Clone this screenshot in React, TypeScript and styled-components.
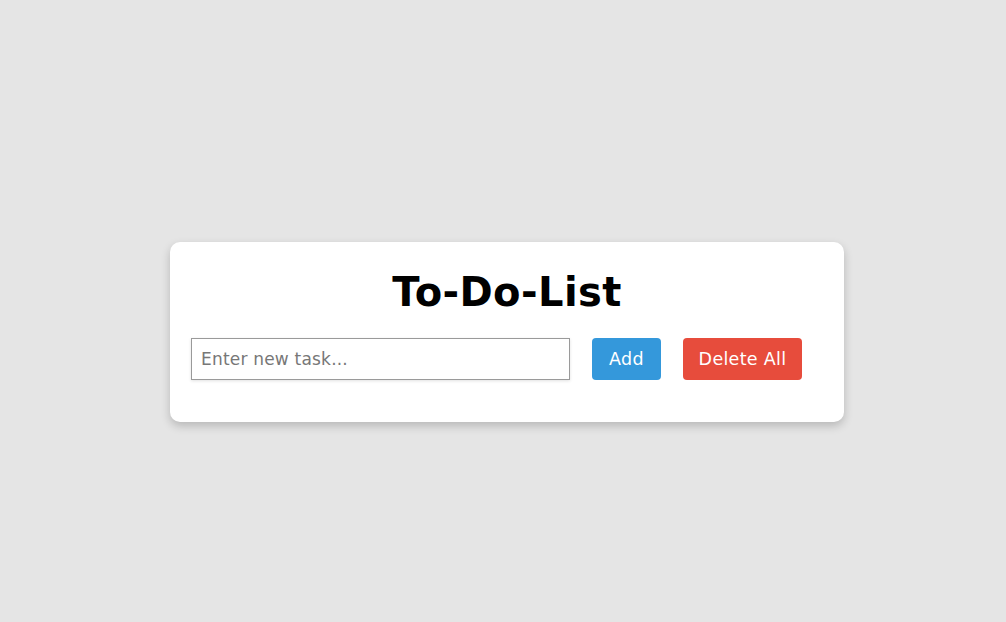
import React from "react";
import styled, { createGlobalStyle } from "styled-components";

const Global = createGlobalStyle`
  html, body { margin: 0; padding: 0; background: #e5e5e5; }
  body { font-family: "DejaVu Sans", "Liberation Sans", sans-serif; }
  * { box-sizing: border-box; }
`;

const Page = styled.div`
  min-height: 622px;
  display: flex;
  justify-content: center;
  align-items: flex-start;
  padding: 242px 0 0 8px;
`;

const Card = styled.div`
  width: 674px;
  height: 180px;
  background: #ffffff;
  border-radius: 10px;
  box-shadow: 0 4px 10px rgba(0, 0, 0, 0.2);
  padding: 24px 21px 0 21px;
  display: flex;
  flex-direction: column;
`;

const Title = styled.h1`
  margin: 0;
  text-align: center;
  font-size: 40px;
  line-height: 52px;
  font-weight: 700;
  color: #000;
  letter-spacing: 0.4px;
`;

const Row = styled.div`
  margin-top: 20px;
  display: flex;
  gap: 22px;
  align-items: center;
`;

const Input = styled.input`
  width: 379px;
  height: 42px;
  border: 1px solid #9a9a9a;
  padding: 0 9px;
  font-family: inherit;
  font-size: 17px;
  letter-spacing: 0.2px;
  color: #333;
  outline: none;
  box-shadow: 0 1px 3px rgba(0, 0, 0, 0.12);
  &::placeholder { color: #777; }
`;

const Button = styled.button<{ $bg: string; $w: number }>`
  width: ${(p) => p.$w}px;
  height: 42px;
  border: none;
  border-radius: 4px;
  background: ${(p) => p.$bg};
  color: #fff;
  font-family: inherit;
  font-size: 17.5px;
  letter-spacing: 0.3px;
  padding: 0;
  cursor: pointer;
`;

export default function App() {
  return (
    <>
      <Global />
      <Page>
        <Card>
          <Title>To-Do-List</Title>
          <Row>
            <Input placeholder="Enter new task..." />
            <Button $bg="#3498db" $w={69}>Add</Button>
            <Button $bg="#e74c3c" $w={119}>Delete All</Button>
          </Row>
        </Card>
      </Page>
    </>
  );
}
